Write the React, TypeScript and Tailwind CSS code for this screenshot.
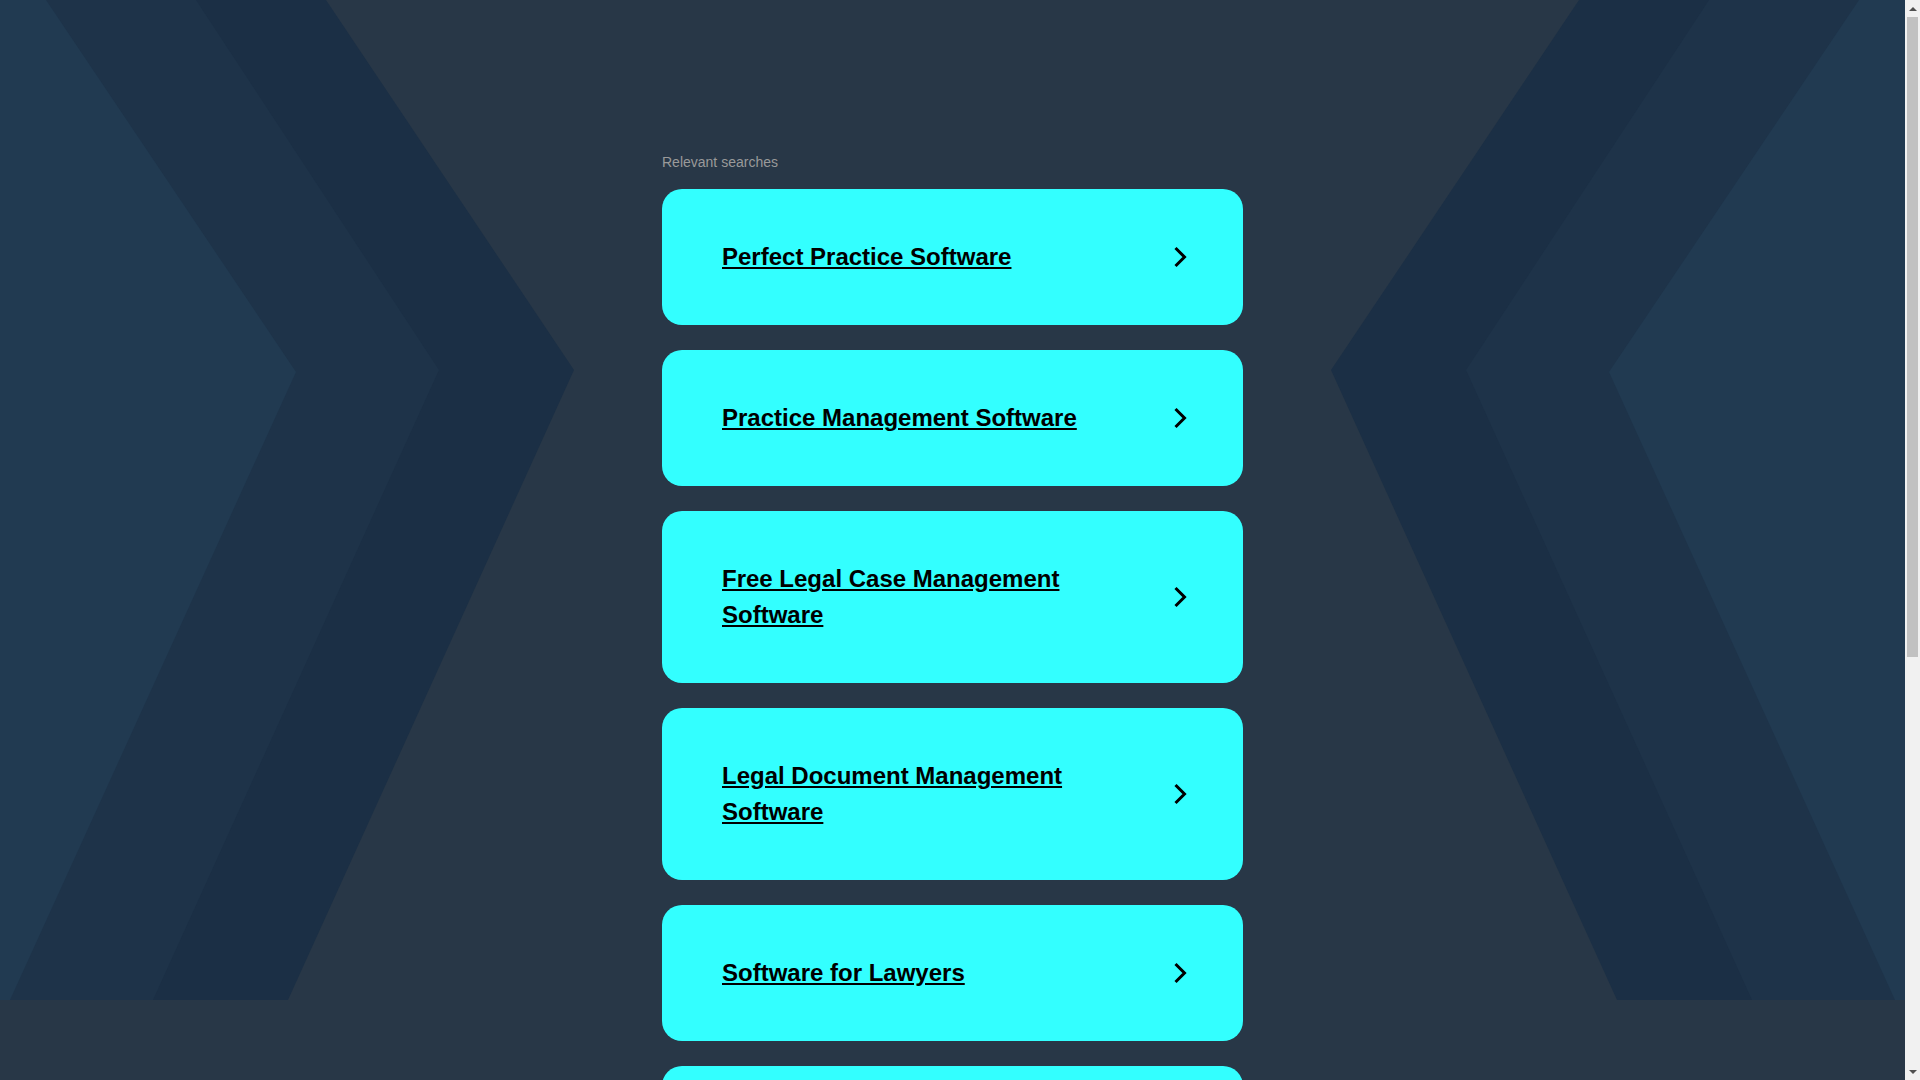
import React from 'react';

const searches = [
  'Perfect Practice Software',
  'Practice Management Software',
  'Free Legal Case Management Software',
  'Legal Document Management Software',
  'Software for Lawyers',
  'Law Firm Management Software',
];

const Chevron = () => (
  <svg width="14" height="22" viewBox="0 0 14 22" fill="none" className="shrink-0">
    <path d="M2.5 2 L11.5 11 L2.5 20" stroke="#000" strokeWidth="3" />
  </svg>
);

// background chevrons, mirrored around the centre of the page
const Backdrop = () => (
  <svg
    className="absolute left-0 top-0 h-[1000px] w-full"
    viewBox="0 0 1905 1000"
    preserveAspectRatio="xMidYMin slice"
  >
    <polygon points="0,0 326,0 574,370 288,1000 0,1000" fill="#1b2f45" />
    <polygon points="0,0 196,0 439,370 153,1000 0,1000" fill="#1e3349" />
    <polygon points="0,0 46,0 296,372 10,1000 0,1000" fill="#213a51" />
    <polygon points="1579,0 1905,0 1905,1000 1617,1000 1331,370" fill="#1b2f45" />
    <polygon points="1709,0 1905,0 1905,1000 1752,1000 1466,370" fill="#1e3349" />
    <polygon points="1859,0 1905,0 1905,1000 1895,1000 1609,372" fill="#213a51" />
  </svg>
);

// browser style scroll bar on the right edge
const ScrollBar = () => (
  <div className="flex h-screen w-[15px] shrink-0 flex-col bg-[#f1f1f1]">
    <div className="flex h-[17px] items-center justify-center">
      <div className="h-0 w-0 border-x-[4px] border-b-[4px] border-x-transparent border-b-[#505050]" />
    </div>
    <div className="flex-1 px-[2px]">
      <div className="h-[640px] bg-[#c1c1c1]" />
    </div>
    <div className="flex h-[17px] items-center justify-center">
      <div className="h-0 w-0 border-x-[4px] border-t-[4px] border-x-transparent border-t-[#505050]" />
    </div>
  </div>
);

export default function App() {
  return (
    <div className="flex h-screen overflow-hidden bg-[#283747] font-['Liberation_Sans',Arial,sans-serif]">
      <div className="relative flex-1">
        <Backdrop />
        <div className="relative mx-auto w-[581px] pb-[60px] pt-[154px]">
          <p className="mb-[19px] text-[14px] leading-4 text-[#9a9a9a]">Relevant searches</p>
          <div className="flex flex-col gap-[25px]">
            {searches.map((s) => (
              <a
                key={s}
                href="#"
                className="flex items-center justify-between rounded-[20px] bg-[#33ffff] py-[50px] pl-[60px] pr-[56px]"
              >
                <span className="max-w-[400px] text-[24px] font-bold leading-9 text-black underline">
                  {s}
                </span>
                <Chevron />
              </a>
            ))}
          </div>
        </div>
      </div>
      <ScrollBar />
    </div>
  );
}
